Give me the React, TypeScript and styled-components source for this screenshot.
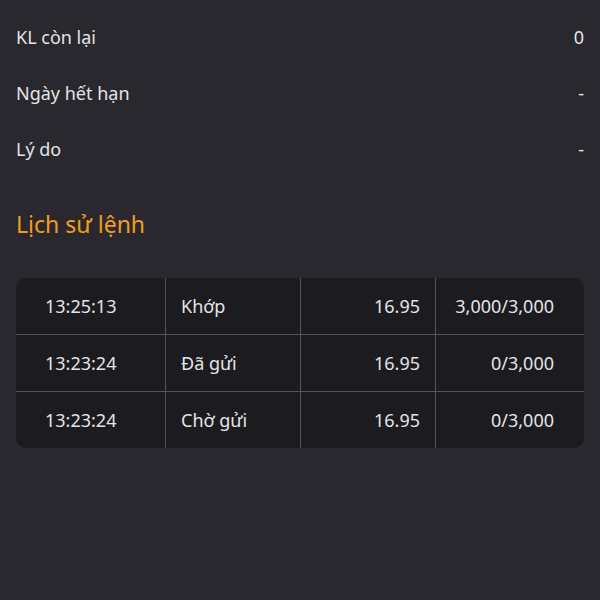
import React from 'react'
import styled, { createGlobalStyle } from 'styled-components'

const GlobalStyle = createGlobalStyle`
  html, body {
    margin: 0;
    padding: 0;
    background: #29282e;
  }
  body {
    font-family: 'Noto Sans', 'Open Sans', sans-serif;
    color: #e4e4e6;
  }
`

const Page = styled.div`
  width: 600px;
  height: 600px;
  box-sizing: border-box;
  padding: 9px 16px 0;
  background: #29282e;
`

const InfoRow = styled.div`
  display: flex;
  justify-content: space-between;
  align-items: center;
  height: 56px;
  font-size: 18px;
  color: #e4e4e6;
`

const SectionTitle = styled.h3`
  margin: 19px 0 0;
  height: 56px;
  display: flex;
  align-items: center;
  font-size: 23px;
  font-weight: 400;
  color: #f29d1e;
`

const Table = styled.div`
  margin-top: 26px;
  background: #1c1b20;
  border-radius: 10px;
  overflow: hidden;
`

const Row = styled.div`
  display: grid;
  grid-template-columns: 149px 135px 135px 1fr;
  height: 56px;
  & + & {
    border-top: 1px solid #55545a;
  }
`

const Cell = styled.div<{ $align: 'left' | 'right'; $padLeft?: number; $padRight?: number }>`
  display: flex;
  align-items: center;
  justify-content: ${(p) => (p.$align === 'left' ? 'flex-start' : 'flex-end')};
  padding: 0 ${(p) => p.$padRight ?? 15}px 0 ${(p) => p.$padLeft ?? 15}px;
  font-size: 18px;
  color: #e4e4e6;
  & + & {
    border-left: 1px solid #55545a;
  }
`

const history = [
  { time: '13:25:13', status: 'Khớp', price: '16.95', qty: '3,000/3,000' },
  { time: '13:23:24', status: 'Đã gửi', price: '16.95', qty: '0/3,000' },
  { time: '13:23:24', status: 'Chờ gửi', price: '16.95', qty: '0/3,000' },
]

export default function App() {
  return (
    <>
      <GlobalStyle />
      <Page>
        <InfoRow>
          <span>KL còn lại</span>
          <span>0</span>
        </InfoRow>
        <InfoRow>
          <span>Ngày hết hạn</span>
          <span>-</span>
        </InfoRow>
        <InfoRow>
          <span>Lý do</span>
          <span>-</span>
        </InfoRow>
        <SectionTitle>Lịch sử lệnh</SectionTitle>
        <Table>
          {history.map((h, i) => (
            <Row key={i}>
              <Cell $align="left" $padLeft={29}>
                {h.time}
              </Cell>
              <Cell $align="left">{h.status}</Cell>
              <Cell $align="right">{h.price}</Cell>
              <Cell $align="right" $padRight={30}>
                {h.qty}
              </Cell>
            </Row>
          ))}
        </Table>
      </Page>
    </>
  )
}
